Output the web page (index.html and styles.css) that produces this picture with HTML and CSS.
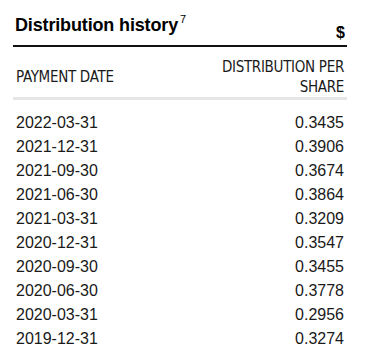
FILE: index.html
```html
<!DOCTYPE html>
<html>
<head>
<meta charset="utf-8">
<link rel="stylesheet" href="styles.css">
</head>
<body>
<section class="panel">
  <div class="title-row">
    <h2 class="title">Distribution history<sup class="note">7</sup></h2>
    <span class="currency">$</span>
  </div>
  <table class="dist">
    <thead>
      <tr>
        <th class="col-date">PAYMENT DATE</th>
        <th class="col-amt">DISTRIBUTION PER<br>SHARE</th>
      </tr>
    </thead>
    <tbody>
      <tr class="first"><td>2022-03-31</td><td class="amt">0.3435</td></tr>
      <tr><td>2021-12-31</td><td class="amt">0.3906</td></tr>
      <tr><td>2021-09-30</td><td class="amt">0.3674</td></tr>
      <tr><td>2021-06-30</td><td class="amt">0.3864</td></tr>
      <tr><td>2021-03-31</td><td class="amt">0.3209</td></tr>
      <tr><td>2020-12-31</td><td class="amt">0.3547</td></tr>
      <tr><td>2020-09-30</td><td class="amt">0.3455</td></tr>
      <tr><td>2020-06-30</td><td class="amt">0.3778</td></tr>
      <tr><td>2020-03-31</td><td class="amt">0.2956</td></tr>
      <tr><td>2019-12-31</td><td class="amt">0.3274</td></tr>
    </tbody>
  </table>
</section>
</body>
</html>
```
FILE: styles.css
```css
html, body {
  margin: 0;
  padding: 0;
  background: #ffffff;
}
.panel {
  width: 334px;
  margin-left: 13px;
  color: #1a1a1a;
  font-family: "Liberation Sans", Arial, sans-serif;
}
.title-row {
  display: flex;
  justify-content: space-between;
  align-items: flex-end;
  padding-top: 14px;
  border-bottom: 2px solid #111;
}
.title {
  margin: 0 0 9px 2px;
  font-size: 18px;
  line-height: 22px;
  font-weight: bold;
  color: #000;
  letter-spacing: -0.15px;
}
.note {
  font-family: "Liberation Sans Narrow", "Liberation Sans", sans-serif;
  font-size: 11px;
  font-weight: normal;
  vertical-align: 8px;
  line-height: 0;
  margin-left: 2px;
}
.currency {
  font-size: 16px;
  line-height: 16px;
  font-weight: bold;
  margin: 0 2px 4px 0;
  color: #000;
}
.dist {
  width: 100%;
  border-collapse: collapse;
}
.dist th {
  font-family: "Liberation Sans Narrow", "DejaVu Sans Condensed", sans-serif;
  font-stretch: condensed;
  font-weight: normal;
  font-size: 15px;
  letter-spacing: -0.3px;
  line-height: 20px;
  color: #1a1a1a;
  padding: 10px 3px 0 3px;
  border-bottom: 3px solid #e6e6e6;
}
.col-date {
  text-align: left;
}
.col-amt {
  text-align: right;
}
.dist td {
  font-size: 16px;
  line-height: 24px;
  padding: 0 3px;
  color: #1a1a1a;
}
.dist tr.first td {
  padding-top: 11px;
}
.dist td.amt {
  text-align: right;
}
```
